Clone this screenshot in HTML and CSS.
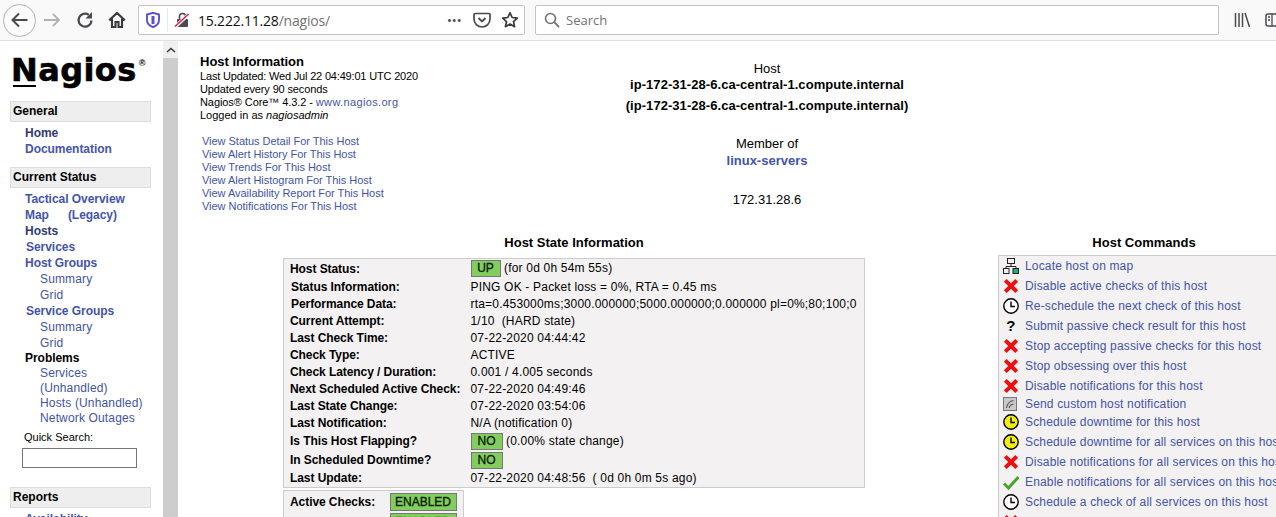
FILE: index.html
```html
<!DOCTYPE html>
<html lang="en">
<head>
<meta charset="utf-8">
<title>Nagios Core - Host Information</title>
<link rel="stylesheet" href="styles.css">
</head>
<body>
<svg class="defs" width="0" height="0" aria-hidden="true">
  <defs>
    <symbol id="i-x" viewBox="0 0 16 16"><path d="M2.300 2.400 13.700 13.600M13.700 2.400 2.300 13.600" stroke="#ee0f0f" stroke-width="4" fill="none"/></symbol>
    <symbol id="i-clock" viewBox="0 0 16 16"><circle cx="8" cy="8" r="7.200" fill="#fff" stroke="#000" stroke-width="1.400"/><path d="M8 3.500V8.500H12" stroke="#000" stroke-width="1.400" fill="none"/></symbol>
    <symbol id="i-yclock" viewBox="0 0 16 16"><circle cx="8" cy="8" r="7.200" fill="#f2ee14" stroke="#000" stroke-width="1.400"/><path d="M8 3.500V8.500H12" stroke="#000" stroke-width="1.400" fill="none"/></symbol>
    <symbol id="i-check" viewBox="0 0 16 16"><path d="M1 9.500 5.500 14 15.500 3" stroke="#46a62c" stroke-width="3" fill="none"/></symbol>
    <symbol id="i-map" viewBox="0 0 16 16"><rect x="4.500" y=".5" width="7" height="5" fill="#f2f0f1" stroke="#222"/><path d="M8 5.500V8.500M3 11V8.500H13V11" stroke="#222" fill="none"/><rect x=".5" y="10.500" width="5.500" height="5" fill="#f2f0f1" stroke="#222"/><rect x="10" y="10.500" width="5.500" height="5" fill="#20b070" stroke="#222"/></symbol>
    <symbol id="i-notify" viewBox="0 0 14 14"><rect x=".5" y=".5" width="13" height="13" fill="#c9c9c9" stroke="#777"/><path d="M3.500 11C4 7 7 4 10.500 3.500M6 11C6.500 9 8 7.500 10.500 7" stroke="#555" stroke-width="1.100" fill="none"/></symbol>
  </defs>
</svg>

<header class="toolbar">
  <button class="back-btn" aria-label="Back">
    <svg width="20" height="20" viewBox="0 0 20 20"><path d="M17.500 10H2.500M9 3.500 2.500 10 9 16.500" stroke="#4a4a4f" stroke-width="2" fill="none"/></svg>
  </button>
  <svg class="tool tool-fwd" width="18" height="18" viewBox="0 0 18 18"><path d="M1 9H16M10 3l6 6-6 6" stroke="#b1b1b3" stroke-width="1.800" fill="none"/></svg>
  <svg class="tool tool-reload" width="18" height="18" viewBox="0 0 18 18"><path d="M15.500 9.500A6.500 6.500 0 1 1 12.800 3.900" stroke="#4a4a4f" stroke-width="2.300" fill="none"/><path d="M16 1V7.500H9.500" fill="#4a4a4f"/></svg>
  <svg class="tool tool-home" width="18" height="18" viewBox="0 0 18 18"><path d="M1.200 9.200 9 2l7.800 7.200M4 7.500V16H7.500V11H10.500V16H14V7.500" stroke="#38383d" stroke-width="2.100" fill="none"/></svg>
  <div class="urlbar">
    <svg class="shield" width="14" height="16" viewBox="0 0 14 16"><path d="M7 .8 13 2.500V8C13 11.500 10 14 7 15.200 4 14 1 11.500 1 8V2.500Z" fill="#fff" stroke="#5a4fd8" stroke-width="1.900"/><path d="M7 4V12" stroke="#5a4fd8" stroke-width="3"/></svg>
    <span class="url-sep"></span>
    <svg class="lock" width="16" height="16" viewBox="0 0 16 16"><rect x="3" y="7" width="11" height="8" rx="1" fill="#4a4a4f"/><path d="M5.500 7V4.500a3 3 0 0 1 6 0V7" stroke="#4a4a4f" stroke-width="1.600" fill="none"/><path d="M1 15 15 2" stroke="#fff" stroke-width="3.400"/><path d="M1 14.500 14.500 2" stroke="#e22850" stroke-width="1.700"/></svg>
    <span class="url"><span class="url-host">15.222.11.28</span><span class="url-path">/nagios/</span></span>
    <span class="url-dots">•••</span>
    <svg class="pocket" width="18" height="16" viewBox="0 0 18 16"><path d="M2 1.500H16a1 1 0 0 1 1 1V7A8 8 0 0 1 1 7V2.500a1 1 0 0 1 1-1Z" fill="none" stroke="#4a4a4f" stroke-width="1.700"/><path d="M5.500 6 9 9.500 12.500 6" fill="none" stroke="#4a4a4f" stroke-width="1.900"/></svg>
    <svg class="star" width="18" height="18" viewBox="0 0 18 18"><path d="M9 1.800 11.200 6.500 16.300 7.100 12.500 10.600 13.600 15.700 9 13.100 4.400 15.700 5.500 10.600 1.700 7.100 6.800 6.500Z" fill="none" stroke="#38383d" stroke-width="1.700" stroke-linejoin="round"/></svg>
  </div>
  <div class="searchbar">
    <svg width="16" height="16" viewBox="0 0 16 16"><circle cx="6.500" cy="6.500" r="5" fill="none" stroke="#737373" stroke-width="1.600"/><path d="M10.200 10.200 15 15" stroke="#737373" stroke-width="1.800"/></svg>
    <span>Search</span>
  </div>
  <svg class="library" width="16" height="16" viewBox="0 0 16 16"><path d="M1.500 1V15M5 1V15M8.500 1V15M11 1 15.500 15" stroke="#4a4a4f" stroke-width="1.500" fill="none"/></svg>
  <svg class="panel" width="18" height="16" viewBox="0 0 18 16"><rect x="1" y="2" width="16" height="12" rx="2" fill="none" stroke="#4a4a4f" stroke-width="1.500"/><path d="M7 2V14M3 5H5M3 8H5" stroke="#4a4a4f" stroke-width="1.300"/></svg>
</header>

<div class="page">
  <nav class="side">
    <div class="logo"><span class="logo-word">Nagios</span><span class="logo-reg">®</span></div>

    <h2 class="nav-head">General</h2>
    <ul class="nav-list">
      <li><a class="visited">Home</a></li>
      <li><a>Documentation</a></li>
    </ul>

    <h2 class="nav-head">Current Status</h2>
    <ul class="nav-list">
      <li><a>Tactical Overview</a></li>
      <li><a>Map</a><a class="legacy">(Legacy)</a></li>
      <li><a class="visited">Hosts</a></li>
      <li class="nudge"><a>Services</a></li>
      <li><a>Host Groups</a></li>
      <li class="sub"><a>Summary</a></li>
      <li class="sub"><a>Grid</a></li>
      <li class="nudge"><a>Service Groups</a></li>
      <li class="sub"><a>Summary</a></li>
      <li class="sub"><a>Grid</a></li>
      <li class="plain">Problems</li>
      <li class="sub tight"><a>Services</a></li>
      <li class="sub tight"><a>(Unhandled)</a></li>
      <li class="sub tight"><a>Hosts (Unhandled)</a></li>
      <li class="sub tight"><a>Network Outages</a></li>
    </ul>
    <label class="quick" for="q">Quick Search:</label>
    <input class="quick-input" id="q" type="text">

    <h2 class="nav-head reports">Reports</h2>
    <ul class="nav-list">
      <li><a>Availability</a></li>
    </ul>
  </nav>

  <div class="scrollbar">
    <div class="scroll-btn"><svg width="10" height="6" viewBox="0 0 10 6"><path d="M1 5 5 1.500 9 5" stroke="#38383d" stroke-width="1.500" fill="none"/></svg></div>
    <div class="scroll-thumb"></div>
  </div>

  <main class="content">
    <section class="top">
      <div class="info">
        <h1 class="info-title">Host Information</h1>
        <p class="info-line lu">Last Updated: Wed Jul 22 04:49:01 UTC 2020</p>
        <p class="info-line ue">Updated every 90 seconds</p>
        <p class="info-line nc">Nagios® Core™ 4.3.2 - <a class="site">www.nagios.org</a></p>
        <p class="info-line">Logged in as <i>nagiosadmin</i></p>
        <ul class="view-links">
          <li><a>View Status Detail For This Host</a></li>
          <li><a>View Alert History For This Host</a></li>
          <li><a>View Trends For This Host</a></li>
          <li><a>View Alert Histogram For This Host</a></li>
          <li><a>View Availability Report For This Host</a></li>
          <li><a>View Notifications For This Host</a></li>
        </ul>
      </div>
      <div class="host">
        <div class="host-label">Host</div>
        <div class="host-name">ip-172-31-28-6.ca-central-1.compute.internal</div>
        <div class="host-name host-name2">(ip-172-31-28-6.ca-central-1.compute.internal)</div>
        <div class="host-label member">Member of</div>
        <div class="host-group"><a>linux-servers</a></div>
        <div class="host-label addr">172.31.28.6</div>
      </div>
    </section>

    <section class="lower">
      <div class="state">
        <h2 class="sec-title">Host State Information</h2>
        <table class="state-table">
          <tr class="r-first"><th>Host Status:</th><td><span class="badge">UP</span> (for 0d 0h 54m 55s)</td></tr>
          <tr><th class="in1">Status Information:</th><td>PING OK - Packet loss = 0%, RTA = 0.45 ms</td></tr>
          <tr><th class="in1">Performance Data:</th><td>rta=0.453000ms;3000.000000;5000.000000;0.000000 pl=0%;80;100;0</td></tr>
          <tr><th>Current Attempt:</th><td>1/10&nbsp; (HARD state)</td></tr>
          <tr><th>Last Check Time:</th><td>07-22-2020 04:44:42</td></tr>
          <tr><th>Check Type:</th><td>ACTIVE</td></tr>
          <tr><th>Check Latency / Duration:</th><td>0.001 / 4.005 seconds</td></tr>
          <tr><th>Next Scheduled Active Check:</th><td>07-22-2020 04:49:46</td></tr>
          <tr><th>Last State Change:</th><td>07-22-2020 03:54:06</td></tr>
          <tr><th>Last Notification:</th><td>N/A (notification 0)</td></tr>
          <tr class="r-badge"><th>Is This Host Flapping?</th><td><span class="badge no">NO</span> (0.00% state change)</td></tr>
          <tr class="r-badge"><th>In Scheduled Downtime?</th><td><span class="badge no">NO</span></td></tr>
          <tr class="r-last"><th>Last Update:</th><td>07-22-2020 04:48:56&nbsp; ( 0d 0h 0m 5s ago)</td></tr>
        </table>
        <table class="checks-table">
          <tr><th>Active Checks:</th><td><span class="badge wide">ENABLED</span></td></tr>
          <tr><th>Passive Checks:</th><td><span class="badge wide">ENABLED</span></td></tr>
        </table>
      </div>

      <div class="commands">
        <h2 class="sec-title cmd-title">Host Commands</h2>
        <ul class="cmd-box">
          <li><svg class="ico"><use href="#i-map"/></svg><a>Locate host on map</a></li>
          <li><svg class="ico"><use href="#i-x"/></svg><a>Disable active checks of this host</a></li>
          <li><svg class="ico"><use href="#i-clock"/></svg><a>Re-schedule the next check of this host</a></li>
          <li><span class="ico q">?</span><a>Submit passive check result for this host</a></li>
          <li><svg class="ico"><use href="#i-x"/></svg><a>Stop accepting passive checks for this host</a></li>
          <li><svg class="ico"><use href="#i-x"/></svg><a>Stop obsessing over this host</a></li>
          <li><svg class="ico"><use href="#i-x"/></svg><a>Disable notifications for this host</a></li>
          <li class="short"><svg class="ico ico-small"><use href="#i-notify"/></svg><a>Send custom host notification</a></li>
          <li><svg class="ico"><use href="#i-yclock"/></svg><a>Schedule downtime for this host</a></li>
          <li><svg class="ico"><use href="#i-yclock"/></svg><a>Schedule downtime for all services on this host</a></li>
          <li><svg class="ico"><use href="#i-x"/></svg><a>Disable notifications for all services on this host</a></li>
          <li><svg class="ico"><use href="#i-check"/></svg><a>Enable notifications for all services on this host</a></li>
          <li><svg class="ico"><use href="#i-clock"/></svg><a>Schedule a check of all services on this host</a></li>
          <li><svg class="ico"><use href="#i-x"/></svg><a>Disable checks of all services on this host</a></li>
        </ul>
      </div>
    </section>
  </main>
</div>
</body>
</html>
```
FILE: styles.css
```css
* { box-sizing: border-box; }
html, body { margin: 0; height: 517px; overflow: hidden; background: #fff; }
body { font-family: "Liberation Sans", Arial, sans-serif; font-size: 12px; color: #000; }
.defs { position: absolute; }
h1, h2, p, ul { margin: 0; padding: 0; font-weight: normal; }
ul { list-style: none; }
a { color: #4354ad; }

/* browser toolbar */
.toolbar { height: 41px; background: #f9f9fa; border-bottom: 1px solid #e1e1e2; display: flex; align-items: center; padding-left: 3px; overflow: hidden; }
.toolbar > * { flex: none; }
.back-btn { width: 33px; height: 33px; border-radius: 50%; border: 1px solid #b1b1b3; background: #fbfbfb; padding: 0; display: flex; align-items: center; justify-content: center; }
.tool-fwd { margin-left: 7px; }
.tool-reload { margin-left: 15px; }
.tool-home { margin-left: 14px; }
.urlbar { margin-left: 12px; width: 387px; height: 30px; background: #fff; border: 1px solid #c4c4c5; border-radius: 2px; display: flex; align-items: center; padding-left: 7px; }
.shield { flex: none; }
.url-sep { width: 1px; height: 24px; background: #e8e8e8; margin: 0 6px 0 7px; }
.lock { flex: none; }
.url { margin-left: 8px; font-family: "Open Sans", sans-serif; font-size: 14px; flex: 1; letter-spacing: -.2px; }
.url-host { color: #111; }
.url-path { color: #737373; }
.url-dots { color: #4a4a4f; font-size: 11px; letter-spacing: 1px; margin-right: 11px; }
.pocket { margin-right: 10px; }
.star { margin-right: 5px; }
.searchbar { margin-left: 10px; width: 684px; height: 30px; background: #fff; border: 1px solid #c4c4c5; border-radius: 2px; display: flex; align-items: center; gap: 6px; padding-left: 8px; font-family: "Open Sans", sans-serif; font-size: 13px; color: #737373; }
.library { margin-left: 15px; }
.panel { margin-left: 15px; }

/* page frame */
.page { display: flex; height: 476px; overflow: hidden; }
.side { width: 163px; flex: none; padding: 12px 0 0 10px; overflow: hidden; }
.scrollbar { width: 15px; flex: none; display: flex; flex-direction: column; }
.scroll-btn { height: 17px; background: #f0f0f0; display: flex; align-items: center; justify-content: center; }
.scroll-thumb { flex: 1; background: #cdcdcd; }
.content { flex: 1; min-width: 0; overflow: hidden; padding: 13px 0 0 22px; }

/* sidebar */
.logo { height: 48px; display: flex; align-items: flex-start; padding-left: 1px; }
.logo-word { font-family: "DejaVu Sans", sans-serif; font-weight: bold; font-size: 32px; line-height: 34px; letter-spacing: .4px; -webkit-text-stroke: .6px #000; background: linear-gradient(#000, #000) 2px 32px / 23px 2px no-repeat; height: 36px; }
.logo-reg { font-size: 9px; font-weight: bold; margin: 5px 0 0 2px; }
.nav-head { width: 141px; height: 21px; background: #eee; border: 1px solid #ddd; font-size: 12px; font-weight: bold; line-height: 19px; padding-left: 2px; }
.nav-list { padding: 3px 0 0 15px; margin-bottom: 10px; font-weight: bold; line-height: 16px; letter-spacing: -.04px; }
.nav-list li { height: 16px; white-space: nowrap; }
.nav-list .nudge { padding-left: 1px; }
.nav-list .sub { padding-left: 15px; font-weight: normal; letter-spacing: .15px; }
.nav-list .tight { height: 15px; line-height: 15px; }
.nav-list .plain { color: #000; height: 15px; line-height: 15px; }
.visited { color: #2e3a78; }
.legacy { margin-left: 19px; }
.quick { display: block; font-size: 11px; margin: -6px 0 0 14px; line-height: 14px; }
.quick-input { display: block; width: 115px; height: 20px; margin: 4px 0 0 12px; border: 1px solid #767676; background: #fff; padding: 0; }
.reports { margin-top: 19px; }

/* top info */
.top { display: flex; height: 182px; }
.info { width: 316px; flex: none; font-size: 11px; }
.info-title { font-size: 13px; font-weight: bold; line-height: 15px; margin-bottom: 1px; }
.info-line { line-height: 13px; }
.lu { letter-spacing: -.18px; }
.ue { letter-spacing: -.14px; }
.nc { letter-spacing: -.08px; }
.site { letter-spacing: .35px; }
.view-links { margin: 13px 0 0 2px; line-height: 13px; letter-spacing: -.03px; }
.host { width: 502px; flex: none; text-align: center; padding-top: 8px; }
.host-label { font-size: 13px; line-height: 14px; }
.host-name { font-weight: bold; font-size: 13px; line-height: 17px; letter-spacing: .05px; }
.host-name2 { margin-top: 4px; }
.member { margin-top: 23px; }
.host-group { font-weight: bold; font-size: 13px; line-height: 17px; margin-top: 1px; }
.addr { margin-top: 24px; }

/* lower */
.lower { display: flex; align-items: flex-start; padding-left: 83px; }
.state { width: 582px; flex: none; }
.sec-title { font-size: 13px; font-weight: bold; text-align: center; line-height: 14px; margin-bottom: 8px; }
.state-table, .checks-table { border-collapse: collapse; background: #f3f1f2; border: 1px solid #ccc; font-size: 12px; }
.state-table { width: 582px; }
.state-table tr { height: 17px; }
.state-table .r-first { height: 20px; }
.state-table .r-badge { height: 19px; }
.state-table .r-last { height: 18px; }
.state-table th, .checks-table th { text-align: left; font-weight: bold; padding: 0 0 0 6px; white-space: nowrap; letter-spacing: -.07px; }
.state-table .in1 { padding-left: 7px; }
.state-table th { width: 187px; }
.state-table td { padding: 0; white-space: nowrap; letter-spacing: .19px; }
.checks-table td { padding: 2px 0 0; white-space: nowrap; }
.checks-table { margin-top: 2px; width: 181px; }
.checks-table tr { height: 20px; }
.checks-table th { width: 106px; padding-top: 2px; }
.badge { display: inline-block; background: #83cd5e; border: 1px solid #777; color: #0c1f05; -webkit-text-stroke: .35px #0c1f05; line-height: 15px; height: 17px; width: 30px; text-align: center; letter-spacing: 0; vertical-align: middle; }
.badge.no { width: 32px; }
.badge.wide { display: block; width: 67px; height: 18px; line-height: 16px; }

/* commands */
.commands { margin-left: 133px; width: 292px; flex: none; }
.cmd-title { margin-bottom: 5px; }
.cmd-box { width: 340px; background: #f3f1f2; border: 1px solid #ccc; padding: 0 0 0 4px; letter-spacing: .16px; }
.cmd-box li { display: flex; align-items: center; height: 20px; white-space: nowrap; gap: 6px; }
.cmd-box .short { height: 16px; }
.ico { width: 16px; height: 16px; flex: none; display: block; }
.ico-small { width: 14px; height: 14px; margin-right: 2px; }
.q { font-weight: bold; font-size: 15px; line-height: 16px; text-align: center; }
```
